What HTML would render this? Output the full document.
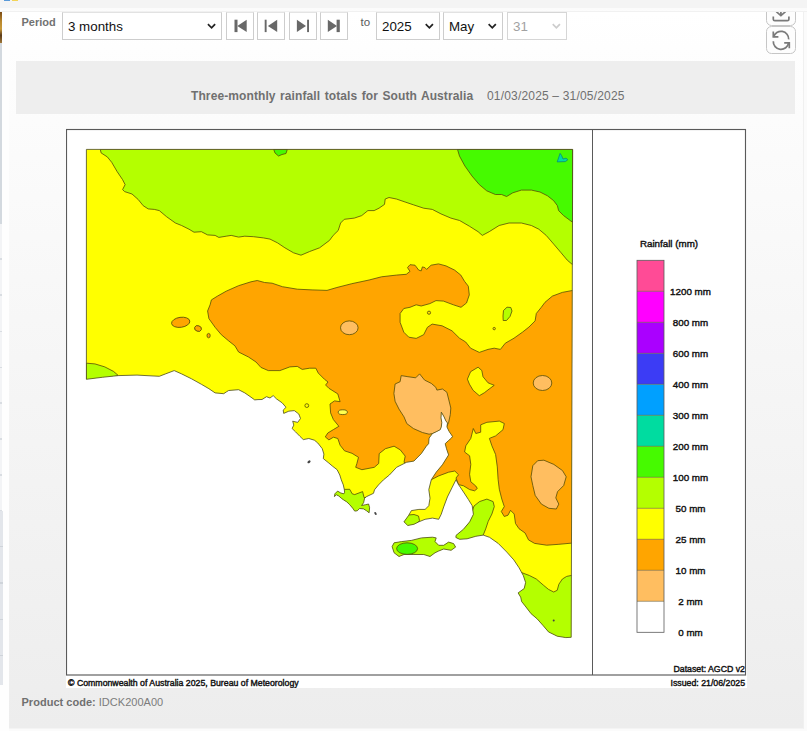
<!DOCTYPE html>
<html lang="en">
<head>
<meta charset="utf-8">
<title>Three-monthly rainfall totals for South Australia</title>
<style>
html,body{margin:0;padding:0;}
body{width:807px;height:731px;overflow:hidden;position:relative;background:#fbfbfb;font-family:"Liberation Sans",Arial,Helvetica,sans-serif;}
.abs{position:absolute;}
#topstrip{left:0;top:0;width:807px;height:12px;background:linear-gradient(#f4f4f4 0,#f4f4f4 7.5px,#fbfbfb 8.5px,#fcfcfc 10.8px,#efefef 11.2px,#f4f4f4 12px);}
#leftstrip{left:0;top:11px;width:9px;height:720px;background:#fefefe;}
.ls{left:0;width:1.8px;}
#panel{left:9px;top:12px;width:794px;height:716px;background:linear-gradient(#ffffff 0%,#fbfbfb 20%,#ededed 100%);border-right:1px solid #f0f0f0;border-bottom:1px solid #f4f4f4;}
#period{left:21.5px;top:15.1px;font-size:11px;font-weight:bold;color:#727272;line-height:15px;}
.sel{top:12px;height:28px;border:1px solid #cdcdcd;background:#fff;box-sizing:border-box;font-size:13.33px;color:#111;line-height:27px;padding-left:5px;border-top-color:#e2e2e2;}
.sel.dis{color:#a2a2a2;border-color:#d6d6d6;}
.btn{top:12px;width:28px;height:28px;border:1px solid #cdcdcd;background:#fff;box-sizing:border-box;border-top-color:#e4e4e4;}
#to{left:360.5px;top:15px;font-size:11.5px;color:#5a5a5a;line-height:15px;}
#band{left:16px;top:61px;width:779px;height:53px;background:#eeeeee;}
#title{left:191px;top:88.5px;font-size:12px;line-height:15px;color:#707070;white-space:nowrap;}
#title b{font-weight:bold;word-spacing:1px;letter-spacing:0.1px;}
#tdate{left:487px;top:88.5px;font-size:12px;line-height:15px;color:#707070;white-space:nowrap;letter-spacing:0.18px;}
#imgbox{left:66px;top:128px;width:681px;height:560px;background:#fff;}
#pcode{left:21.5px;top:694.7px;font-size:11px;line-height:15px;color:#7c7c7c;white-space:nowrap;letter-spacing:0.02px;}
#pcode b{color:#707070;}
.tool{left:766px;width:30px;border:1px solid #c6c6c6;border-radius:5.5px;background:#fdfdfd;box-sizing:border-box;}
</style>
</head>
<body>
<div id="leftstrip" class="abs"></div>
<div class="abs ls" style="top:12px;height:31px;background:linear-gradient(#7a4a14,#b8862c 30%,#c99a3a 55%,#5a3a18 75%,#a07838)"></div>
<div class="abs ls" style="top:43px;height:181px;background:#d3d9df"></div>
<div class="abs ls" style="top:224px;height:287px;background:repeating-linear-gradient(#f3f4f6 0,#f3f4f6 34.5px,#d9dde2 34.5px,#d9dde2 36px)"></div>
<div class="abs ls" style="top:511px;height:174px;width:2.5px;background:repeating-linear-gradient(#e3e6eb 0,#e3e6eb 35px,#cfd4da 35px,#cfd4da 36.3px)"></div>
<div class="abs" style="left:4px;top:0;width:6px;height:1px;background:#5a9ad8;z-index:5"></div>
<div class="abs" style="left:11.5px;top:0;width:6px;height:1px;background:#f3d458;z-index:5"></div>
<div id="panel" class="abs"></div>
<div id="period" class="abs">Period</div>
<div class="abs sel" style="left:62px;width:160px">3 months</div>
<div class="abs btn" style="left:226px"></div>
<div class="abs btn" style="left:257px"></div>
<div class="abs btn" style="left:289px"></div>
<div class="abs btn" style="left:320px"></div>
<div id="to" class="abs">to</div>
<div class="abs sel" style="left:376px;width:64px">2025</div>
<div class="abs sel" style="left:443px;width:59.5px">May</div>
<div class="abs sel dis" style="left:507px;width:59.5px">31</div>
<svg class="abs" style="left:0;top:0" width="807" height="60" viewBox="0 0 807 60">
<path d="M208.6 24.8 L211.6 27.8 L214.5 24.8" fill="none" stroke="#222" stroke-width="1.8" stroke-linecap="square"/>
<path d="M426.4 24.8 L429.4 27.8 L432.3 24.8" fill="none" stroke="#222" stroke-width="1.8" stroke-linecap="square"/>
<path d="M489.3 24.8 L492.3 27.8 L495.2 24.8" fill="none" stroke="#222" stroke-width="1.8" stroke-linecap="square"/>
<path d="M553.4 24.8 L556.4 27.8 L559.3 24.8" fill="none" stroke="#cdcdcd" stroke-width="1.8" stroke-linecap="square"/>
<g fill="#686868">
<rect x="234.5" y="19.7" width="3" height="12.4"/><path d="M246.7 19.7 L237.3 25.9 L246.7 32.1Z"/>
<rect x="264.7" y="19.7" width="1.9" height="12.4"/><path d="M277.2 19.7 L267.9 25.9 L277.2 32.1Z"/>
<path d="M296.9 19.7 L306 25.9 L296.9 32.1Z"/><rect x="307.1" y="19.7" width="1.9" height="12.4"/>
<path d="M327.8 19.7 L337 25.9 L327.8 32.1Z"/><rect x="336.6" y="19.7" width="3.2" height="12.4"/>
</g></svg>
<div class="abs tool" style="top:-3px;height:28.5px"></div>
<div class="abs tool" style="top:25.5px;height:28px"></div>
<svg class="abs" style="left:760px;top:0" width="47" height="60" viewBox="760 0 47 60"><g fill="none" stroke="#7a7a7a" stroke-width="1.7">
<path d="M773.3 16.4 V19.2 Q773.3 20.7 774.8 20.7 H787.4 Q788.9 20.7 788.9 19.2 V16.4"/>
<path d="M776.3 11.6 L780.9 15.6 L785.5 11.6 M780.9 15.6 V8"/>
<path d="M773.6 36.9 A7.7 7.7 0 0 1 788.7 39.4"/>
<path d="M788.6 42.8 A7.7 7.7 0 0 1 773.3 41.2"/>
<path d="M773.3 31.4 V36.9 H778.4"/>
<path d="M789.3 48.2 V42.8 H784.2"/>
</g></svg>
<div id="topstrip" class="abs"></div>
<div id="band" class="abs"></div>
<div id="title" class="abs"><b>Three-monthly rainfall totals for South Australia</b></div>
<div id="tdate" class="abs">01/03/2025 – 31/05/2025</div>
<div id="imgbox" class="abs"></div>
<svg class="abs" style="left:66px;top:128px" width="681" height="560" viewBox="66 128 681 560" font-family="'Liberation Sans',Arial,Helvetica,sans-serif">
<defs><clipPath id="land"><path d="M86.4 149.4 L572.7 149.4 L571.2 637.3 L565.8 637.6 L557.2 636.2 L548.5 631.9 L543.3 625.8 L537.2 618.9 L531.1 613.7 L525.1 605.9 L521.6 601.5 L520.7 597.2 L518.1 592.9 L524.2 588.5 L525.6 582.5 L523.3 575.5 L519.0 567.7 L513.8 559.9 L506.8 552.1 L498.2 543.4 L489.5 537.3 L483.2 535.1 L475.8 536.3 L467.1 538.8 L459.7 539.3 L455.9 537.5 L456.0 535.4 L463.5 529.2 L469.7 521.8 L473.4 514.3 L472.2 505.7 L468.4 499.5 L463.5 492.0 L458.5 484.6 L456.0 479.7 L452.3 487.1 L447.4 497.0 L443.7 506.9 L441.2 514.3 L438.7 519.3 L432.5 518.1 L425.1 519.3 L418.9 521.8 L413.9 524.3 L407.7 525.5 L404.0 521.8 L408.5 515.6 L411.4 510.6 L418.9 509.4 L425.1 509.4 L428.8 505.7 L430.0 498.2 L428.8 489.6 L431.3 479.7 L436.2 472.2 L442.4 464.8 L448.6 454.9 L446.5 448.7 L445.2 443.7 L448.6 440.5 L451.4 438.1 L452.5 436.4 L449.1 431.4 L446.9 426.9 L447.5 423.0 L445.8 420.8 L444.1 416.9 L441.9 413.0 L441.3 412.2 L441.0 418.0 L441.8 422.5 L441.3 426.9 L440.2 429.7 L436.9 431.4 L432.4 433.6 L429.1 438.1 L428.6 443.7 L426.3 446.2 L421.3 453.6 L413.9 461.1 L406.5 462.3 L396.6 467.3 L389.4 475.0 L383.4 479.9 L378.5 484.9 L374.5 489.8 L373.5 493.3 L366.6 496.6 L364.6 498.2 L363.6 502.7 L361.6 505.5 L365.6 504.7 L368.6 504.0 L369.6 507.7 L369.1 512.8 L366.6 510.8 L363.6 508.9 L359.6 508.5 L357.2 510.8 L354.7 511.1 L352.7 508.2 L349.7 504.7 L346.8 501.9 L343.3 499.7 L341.3 498.2 L338.8 496.0 L336.4 494.8 L334.4 496.6 L334.9 493.8 L337.6 491.1 L340.8 493.0 L343.8 493.8 L344.6 492.3 L344.3 489.5 L343.3 484.9 L341.3 479.9 L339.8 475.0 L337.1 469.7 L332.3 466.0 L328.9 463.1 L323.3 458.6 L323.9 454.1 L322.2 448.6 L317.8 443.0 L314.4 440.2 L308.8 438.5 L303.3 439.6 L299.9 436.3 L295.5 431.8 L292.1 428.5 L293.8 425.1 L292.7 421.2 L297.7 422.4 L300.5 418.5 L298.8 414.0 L294.3 410.6 L288.8 411.2 L283.7 413.4 L283.2 410.1 L286.0 407.3 L282.1 402.8 L276.5 398.9 L273.2 395.6 L270.0 398.0 L266.5 396.7 L262.0 399.5 L258.0 399.6 L254.7 399.9 L251.0 397.2 L244.8 392.9 L238.6 389.7 L228.7 390.5 L226.7 391.7 L223.7 393.7 L215.1 392.9 L208.9 388.7 L201.4 384.3 L191.5 378.8 L181.6 373.9 L174.2 370.6 L165.5 373.9 L159.3 376.3 L137.0 375.1 L118.4 375.6 L102.3 377.3 L86.4 379.3Z"/><path d="M392.1 546.6 L394.1 542.8 L401.5 541.6 L411.4 540.4 L421.4 537.9 L432.5 537.2 L436.2 537.9 L435.0 541.6 L438.7 545.3 L443.7 545.3 L448.6 542.1 L453.6 543.6 L455.6 547.1 L451.1 550.3 L443.7 549.0 L438.7 551.0 L435.0 552.8 L430.0 556.5 L423.8 554.5 L413.9 554.5 L404.0 554.5 L399.0 556.5 L394.1 552.8Z"/></clipPath></defs>
<rect x="66" y="128" width="681" height="560" fill="#fff"/>
<g clip-path="url(#land)" stroke="#554c08" stroke-width="0.8" stroke-linejoin="round">
<rect x="80" y="140" width="500" height="505" fill="#ffff00" stroke="none"/>
<polygon points="100.3,149.4 101.1,152.9 107.3,156.9 111.7,162.3 117.2,171.7 122.6,179.7 125.1,184.6 122.6,189.6 124.6,191.6 132.0,194.0 138.2,199.5 143.2,205.7 148.2,208.9 154.3,209.4 159.3,210.6 166.7,216.8 175.4,223.0 181.6,225.5 189.0,229.2 194.0,232.2 201.4,231.7 207.6,234.9 215.1,235.4 218.8,237.4 226.2,236.2 231.2,235.4 238.6,237.1 244.8,236.2 253.5,236.7 263.4,237.9 270.0,239.1 277.4,242.8 284.9,247.8 293.5,252.8 301.0,255.2 309.7,251.5 319.6,247.8 329.5,240.4 333.2,235.4 338.2,230.5 340.6,223.0 344.3,219.3 354.3,218.1 361.7,215.6 367.9,210.6 374.1,210.6 379.0,208.2 384.5,204.4 385.2,199.0 389.0,197.5 396.4,199.0 405.1,202.0 413.7,204.9 423.7,208.2 432.3,209.4 441.0,213.9 450.9,218.1 459.6,220.5 469.4,226.2 478.1,231.7 482.3,235.4 489.2,231.7 499.1,225.5 509.0,223.0 521.4,223.0 531.4,225.5 538.8,229.2 546.2,235.4 553.7,244.1 561.1,252.8 567.3,260.2 572.6,264.7 572.6,149.4" fill="#b4ff00"/>
<polygon points="457.5,149.4 459.5,156.1 464.9,166.0 471.9,175.9 479.3,184.6 486.7,190.8 495.4,194.5 501.6,194.5 506.6,196.5 512.8,192.8 521.4,190.1 531.4,190.1 540.0,192.0 547.5,195.8 553.7,200.7 557.4,205.7 558.6,210.6 563.6,215.6 572.6,222.3 572.6,149.4" fill="#46fa00"/>
<polygon points="273.7,149.4 275.0,153.0 278.5,156.0 282.0,154.5 286.0,153.5 287.3,149.4" fill="#46fa00"/>
<polygon points="560.1,153.4 557.2,161.9 565.3,161.6 567.9,159.7 566.0,158.2 563.0,159.0 561.6,155.6" fill="#00dca0" stroke="#0a8a78"/>
<polygon points="207.6,311.0 210.1,304.8 211.4,299.9 217.5,296.1 226.2,291.2 238.6,285.7 251.0,281.8 257.2,280.5 264.6,282.5 272.1,283.2 282.4,286.7 297.3,289.2 312.1,289.9 327.0,290.4 336.9,287.5 351.8,283.7 369.1,280.0 381.5,276.8 396.4,275.1 406.3,274.3 410.0,271.4 407.5,267.6 410.0,264.7 415.0,265.2 418.7,270.1 421.2,270.9 422.4,266.9 424.9,267.6 426.6,269.4 431.1,265.2 438.5,263.9 446.0,265.9 454.6,270.1 460.8,275.1 464.5,281.3 468.3,286.2 469.3,294.9 466.5,303.0 461.0,307.3 453.4,304.8 443.5,301.1 436.0,300.6 429.9,303.6 421.2,306.0 416.2,304.8 410.0,307.3 403.8,308.5 400.1,313.5 400.1,322.3 403.8,332.2 408.8,337.2 416.2,338.4 423.7,334.7 427.4,327.3 432.2,324.1 442.1,325.8 452.0,330.8 459.5,338.2 465.7,342.0 470.6,348.2 479.3,352.4 488.0,349.4 494.2,348.2 500.4,349.4 505.3,343.2 514.0,338.2 522.7,332.0 528.9,327.1 535.1,320.9 536.3,313.5 541.3,307.3 545.0,302.3 552.4,296.1 562.3,292.4 574.0,290.2 574.0,542.9 558.9,544.3 546.7,545.2 534.6,543.4 528.5,539.9 525.1,533.0 519.0,528.7 515.5,523.5 514.2,514.0 510.5,510.3 508.0,515.2 504.3,516.5 501.3,511.5 504.3,506.6 501.8,499.1 499.3,489.2 498.1,479.3 497.3,466.9 495.6,454.5 491.9,445.8 489.4,438.4 495.6,435.9 503.0,429.7 504.3,423.5 499.3,421.1 486.9,422.3 480.7,424.8 480.7,432.2 475.8,433.5 473.3,428.5 470.8,438.4 465.8,445.8 464.6,452.0 469.6,455.8 470.8,464.4 469.6,474.3 470.8,481.8 475.8,486.0 477.3,488.5 474.6,490.8 469.7,489.6 463.5,485.8 458.5,484.6 456.0,478.0 458.5,474.7 454.8,471.0 448.6,472.2 438.7,475.9 431.3,479.7 404.0,462.3 405.2,456.1 400.3,449.9 394.1,446.2 385.4,448.7 379.2,453.6 378.7,463.5 374.3,467.3 361.9,469.7 355.7,467.3 356.9,463.5 358.5,457.3 352.0,453.3 344.5,450.8 340.1,445.2 337.8,438.5 333.4,437.2 328.9,439.9 325.3,436.9 327.8,433.0 333.4,429.6 338.9,426.3 333.4,419.6 330.6,412.9 330.0,404.0 334.5,400.9 340.1,401.7 337.8,393.9 328.9,388.3 325.6,385.0 328.0,382.0 324.5,379.3 318.3,373.1 315.8,368.2 309.7,368.2 302.2,369.4 297.3,366.4 289.8,366.9 279.9,370.6 268.3,370.6 260.9,367.4 256.0,362.0 248.5,357.0 238.6,352.0 234.9,345.8 228.7,340.9 221.3,334.7 215.1,327.3 208.9,318.6" fill="#ffa500"/>
<ellipse cx="180.7" cy="322.3" rx="9.2" ry="5.0" transform="rotate(-8 180.7 322.3)" fill="#ffa500"/>
<ellipse cx="198.0" cy="328.5" rx="3.5" ry="2.8" transform="rotate(20 198.0 328.5)" fill="#ffa500"/>
<ellipse cx="208.6" cy="335.6" rx="1.6" ry="2.2" transform="rotate(0 208.6 335.6)" fill="#ffa500"/>
<polygon points="395.1,384.0 400.1,381.7 401.2,375.6 407.9,376.7 415.7,377.8 419.6,373.9 424.6,380.1 431.3,383.4 435.8,387.3 436.9,390.1 442.5,389.0 446.9,392.3 448.6,399.0 450.8,408.0 450.3,414.6 448.6,422.5 446.0,428.0 440.0,432.0 429.1,434.2 422.4,432.5 413.5,428.6 406.8,423.6 404.0,416.9 399.0,409.1 395.1,401.3 393.9,393.5" fill="#ffbe60"/>
<polygon points="532.8,465.7 537.7,460.7 543.9,460.2 553.8,464.4 562.5,470.6 566.2,476.8 563.7,485.5 557.5,491.7 555.8,497.9 558.8,504.1 556.3,509.0 548.9,508.3 541.4,504.1 535.2,495.4 532.8,485.5 531.0,476.8" fill="#ffbe60"/>
<ellipse cx="349.3" cy="327.8" rx="8.8" ry="6.9" fill="#ffbe60"/>
<ellipse cx="542.5" cy="383" rx="9.3" ry="7.5" fill="#ffbe60"/>
<polygon points="467.4,379.1 470.6,371.7 478.1,367.2 481.8,370.5 483.0,376.7 488.0,382.8 494.2,385.3 489.2,389.0 484.3,392.8 479.3,395.7 473.1,390.3 469.4,384.1" fill="#ffff00"/>
<polygon points="503.0,316.0 503.5,310.5 507.0,307.2 510.8,307.5 512.0,311.0 510.0,316.5 506.5,320.5 503.2,320.5" fill="#b4ff00"/>
<polygon points="86.4,363.2 94.9,363.9 104.8,366.9 113.5,371.4 118.4,375.6 102.3,379.0 86.4,381.0" fill="#b4ff00"/>
<polygon points="520.0,572.0 529.4,575.5 536.3,579.0 543.3,585.1 548.5,589.4 553.7,592.0 557.2,590.3 558.9,584.2 562.4,579.0 566.7,576.4 572.6,575.2 572.6,640.0 510.0,640.0 510.0,585.0" fill="#b4ff00"/>
<polygon points="479.5,501.6 486.9,499.1 493.1,501.6 494.3,506.6 491.9,514.0 488.2,521.4 485.7,528.9 483.2,535.1 480.0,540.0 450.0,542.0 452.0,535.0 459.7,531.0 466.0,526.0 470.8,519.0 472.0,512.0 474.0,506.0" fill="#b4ff00"/>
<polygon points="343.0,489.4 349.7,489.3 352.2,493.8 354.7,494.6 362.6,491.6 364.1,497.6 368.0,497.0 373.0,503.0 371.0,515.0 350.0,515.0 331.0,498.0 332.0,489.5" fill="#b4ff00"/>
<polygon points="404.0,521.8 402.0,518.0 408.5,515.0 414.0,514.5 418.5,516.0 419.5,520.5 416.0,524.5 407.7,527.0 403.0,525.0" fill="#b4ff00"/>
<rect x="388" y="532" width="72" height="30" fill="#b4ff00" stroke="none"/>
<ellipse cx="407.1" cy="548.6" rx="10.5" ry="5.8" fill="#46fa00"/>
<circle cx="429" cy="312.7" r="1.6" fill="#ffe000"/>
<circle cx="494.2" cy="328.6" r="1.2" fill="#ffe000"/>
<circle cx="306.8" cy="405.6" r="1.9" fill="#ffff00"/>
<ellipse cx="342.8" cy="412.2" rx="4.6" ry="2.4" fill="#ffff50"/>
</g>
<path d="M86.4 149.4 L572.7 149.4 L571.2 637.3 L565.8 637.6 L557.2 636.2 L548.5 631.9 L543.3 625.8 L537.2 618.9 L531.1 613.7 L525.1 605.9 L521.6 601.5 L520.7 597.2 L518.1 592.9 L524.2 588.5 L525.6 582.5 L523.3 575.5 L519.0 567.7 L513.8 559.9 L506.8 552.1 L498.2 543.4 L489.5 537.3 L483.2 535.1 L475.8 536.3 L467.1 538.8 L459.7 539.3 L455.9 537.5 L456.0 535.4 L463.5 529.2 L469.7 521.8 L473.4 514.3 L472.2 505.7 L468.4 499.5 L463.5 492.0 L458.5 484.6 L456.0 479.7 L452.3 487.1 L447.4 497.0 L443.7 506.9 L441.2 514.3 L438.7 519.3 L432.5 518.1 L425.1 519.3 L418.9 521.8 L413.9 524.3 L407.7 525.5 L404.0 521.8 L408.5 515.6 L411.4 510.6 L418.9 509.4 L425.1 509.4 L428.8 505.7 L430.0 498.2 L428.8 489.6 L431.3 479.7 L436.2 472.2 L442.4 464.8 L448.6 454.9 L446.5 448.7 L445.2 443.7 L448.6 440.5 L451.4 438.1 L452.5 436.4 L449.1 431.4 L446.9 426.9 L447.5 423.0 L445.8 420.8 L444.1 416.9 L441.9 413.0 L441.3 412.2 L441.0 418.0 L441.8 422.5 L441.3 426.9 L440.2 429.7 L436.9 431.4 L432.4 433.6 L429.1 438.1 L428.6 443.7 L426.3 446.2 L421.3 453.6 L413.9 461.1 L406.5 462.3 L396.6 467.3 L389.4 475.0 L383.4 479.9 L378.5 484.9 L374.5 489.8 L373.5 493.3 L366.6 496.6 L364.6 498.2 L363.6 502.7 L361.6 505.5 L365.6 504.7 L368.6 504.0 L369.6 507.7 L369.1 512.8 L366.6 510.8 L363.6 508.9 L359.6 508.5 L357.2 510.8 L354.7 511.1 L352.7 508.2 L349.7 504.7 L346.8 501.9 L343.3 499.7 L341.3 498.2 L338.8 496.0 L336.4 494.8 L334.4 496.6 L334.9 493.8 L337.6 491.1 L340.8 493.0 L343.8 493.8 L344.6 492.3 L344.3 489.5 L343.3 484.9 L341.3 479.9 L339.8 475.0 L337.1 469.7 L332.3 466.0 L328.9 463.1 L323.3 458.6 L323.9 454.1 L322.2 448.6 L317.8 443.0 L314.4 440.2 L308.8 438.5 L303.3 439.6 L299.9 436.3 L295.5 431.8 L292.1 428.5 L293.8 425.1 L292.7 421.2 L297.7 422.4 L300.5 418.5 L298.8 414.0 L294.3 410.6 L288.8 411.2 L283.7 413.4 L283.2 410.1 L286.0 407.3 L282.1 402.8 L276.5 398.9 L273.2 395.6 L270.0 398.0 L266.5 396.7 L262.0 399.5 L258.0 399.6 L254.7 399.9 L251.0 397.2 L244.8 392.9 L238.6 389.7 L228.7 390.5 L226.7 391.7 L223.7 393.7 L215.1 392.9 L208.9 388.7 L201.4 384.3 L191.5 378.8 L181.6 373.9 L174.2 370.6 L165.5 373.9 L159.3 376.3 L137.0 375.1 L118.4 375.6 L102.3 377.3 L86.4 379.3Z" fill="none" stroke="#4a4a20" stroke-width="0.8" stroke-linejoin="round"/>
<path d="M392.1 546.6 L394.1 542.8 L401.5 541.6 L411.4 540.4 L421.4 537.9 L432.5 537.2 L436.2 537.9 L435.0 541.6 L438.7 545.3 L443.7 545.3 L448.6 542.1 L453.6 543.6 L455.6 547.1 L451.1 550.3 L443.7 549.0 L438.7 551.0 L435.0 552.8 L430.0 556.5 L423.8 554.5 L413.9 554.5 L404.0 554.5 L399.0 556.5 L394.1 552.8Z" fill="none" stroke="#4a4a20" stroke-width="0.8" stroke-linejoin="round"/>
<g fill="#444"><ellipse cx="309" cy="461.8" rx="1.8" ry="1.2" transform="rotate(-40 309 461.8)"/><ellipse cx="375.5" cy="513.5" rx="1" ry="1.6" transform="rotate(-30 375.5 513.5)"/><circle cx="553.7" cy="620.6" r="1" /></g>
<rect x="66.5" y="129.5" width="679" height="545.5" fill="none" stroke="#5a5a5a" stroke-width="1.15"/>
<line x1="592.5" y1="129" x2="592.5" y2="675" stroke="#5a5a5a" stroke-width="1"/>
<rect x="637" y="260.3" width="27" height="31.0" fill="#ff4b96"/>
<rect x="637" y="291.3" width="27" height="31.0" fill="#ff00ff"/>
<rect x="637" y="322.3" width="27" height="31.0" fill="#aa00ff"/>
<rect x="637" y="353.3" width="27" height="31.0" fill="#3c3cf5"/>
<rect x="637" y="384.3" width="27" height="31.0" fill="#00a0ff"/>
<rect x="637" y="415.3" width="27" height="31.0" fill="#00dca0"/>
<rect x="637" y="446.3" width="27" height="31.0" fill="#46fa00"/>
<rect x="637" y="477.3" width="27" height="31.0" fill="#b4ff00"/>
<rect x="637" y="508.3" width="27" height="31.0" fill="#ffff00"/>
<rect x="637" y="539.3" width="27" height="31.0" fill="#ffa500"/>
<rect x="637" y="570.3" width="27" height="31.0" fill="#ffbe60"/>
<rect x="637" y="601.3" width="27" height="31.0" fill="#ffffff"/>
<g stroke="#5a5a5a" stroke-width="0.8" fill="none"><rect x="637" y="260.3" width="27" height="372.0"/>
<line x1="637" y1="291.3" x2="664" y2="291.3" stroke="#6a5a30" stroke-opacity="0.75"/>
<line x1="637" y1="322.3" x2="664" y2="322.3" stroke="#6a5a30" stroke-opacity="0.75"/>
<line x1="637" y1="353.3" x2="664" y2="353.3" stroke="#6a5a30" stroke-opacity="0.75"/>
<line x1="637" y1="384.3" x2="664" y2="384.3" stroke="#6a5a30" stroke-opacity="0.75"/>
<line x1="637" y1="415.3" x2="664" y2="415.3" stroke="#6a5a30" stroke-opacity="0.75"/>
<line x1="637" y1="446.3" x2="664" y2="446.3" stroke="#6a5a30" stroke-opacity="0.75"/>
<line x1="637" y1="477.3" x2="664" y2="477.3" stroke="#6a5a30" stroke-opacity="0.75"/>
<line x1="637" y1="508.3" x2="664" y2="508.3" stroke="#6a5a30" stroke-opacity="0.75"/>
<line x1="637" y1="539.3" x2="664" y2="539.3" stroke="#6a5a30" stroke-opacity="0.75"/>
<line x1="637" y1="570.3" x2="664" y2="570.3" stroke="#6a5a30" stroke-opacity="0.75"/>
<line x1="637" y1="601.3" x2="664" y2="601.3" stroke="#6a5a30" stroke-opacity="0.75"/>
</g>
<g font-size="9.8" fill="#111" stroke="#111" stroke-width="0.4" text-anchor="middle">
<text x="669" y="246.8">Rainfall (mm)</text>
<text x="690.5" y="294.9">1200 mm</text>
<text x="690.5" y="325.9">800 mm</text>
<text x="690.5" y="356.9">600 mm</text>
<text x="690.5" y="387.9">400 mm</text>
<text x="690.5" y="418.9">300 mm</text>
<text x="690.5" y="449.9">200 mm</text>
<text x="690.5" y="480.9">100 mm</text>
<text x="690.5" y="511.9">50 mm</text>
<text x="690.5" y="542.9">25 mm</text>
<text x="690.5" y="573.9">10 mm</text>
<text x="690.5" y="604.9">2 mm</text>
<text x="690.5" y="635.9">0 mm</text>
</g>
<g font-size="8.75" fill="#111" stroke="#111" stroke-width="0.4">
<text x="745" y="672.3" text-anchor="end">Dataset: AGCD v2</text>
<text x="745" y="686.3" text-anchor="end">Issued: 21/06/2025</text>
<text x="68" y="686.3">© Commonwealth of Australia 2025, Bureau of Meteorology</text>
</g>
</svg>
<div id="pcode" class="abs"><b>Product code:</b> IDCK200A00</div>
</body>
</html>
